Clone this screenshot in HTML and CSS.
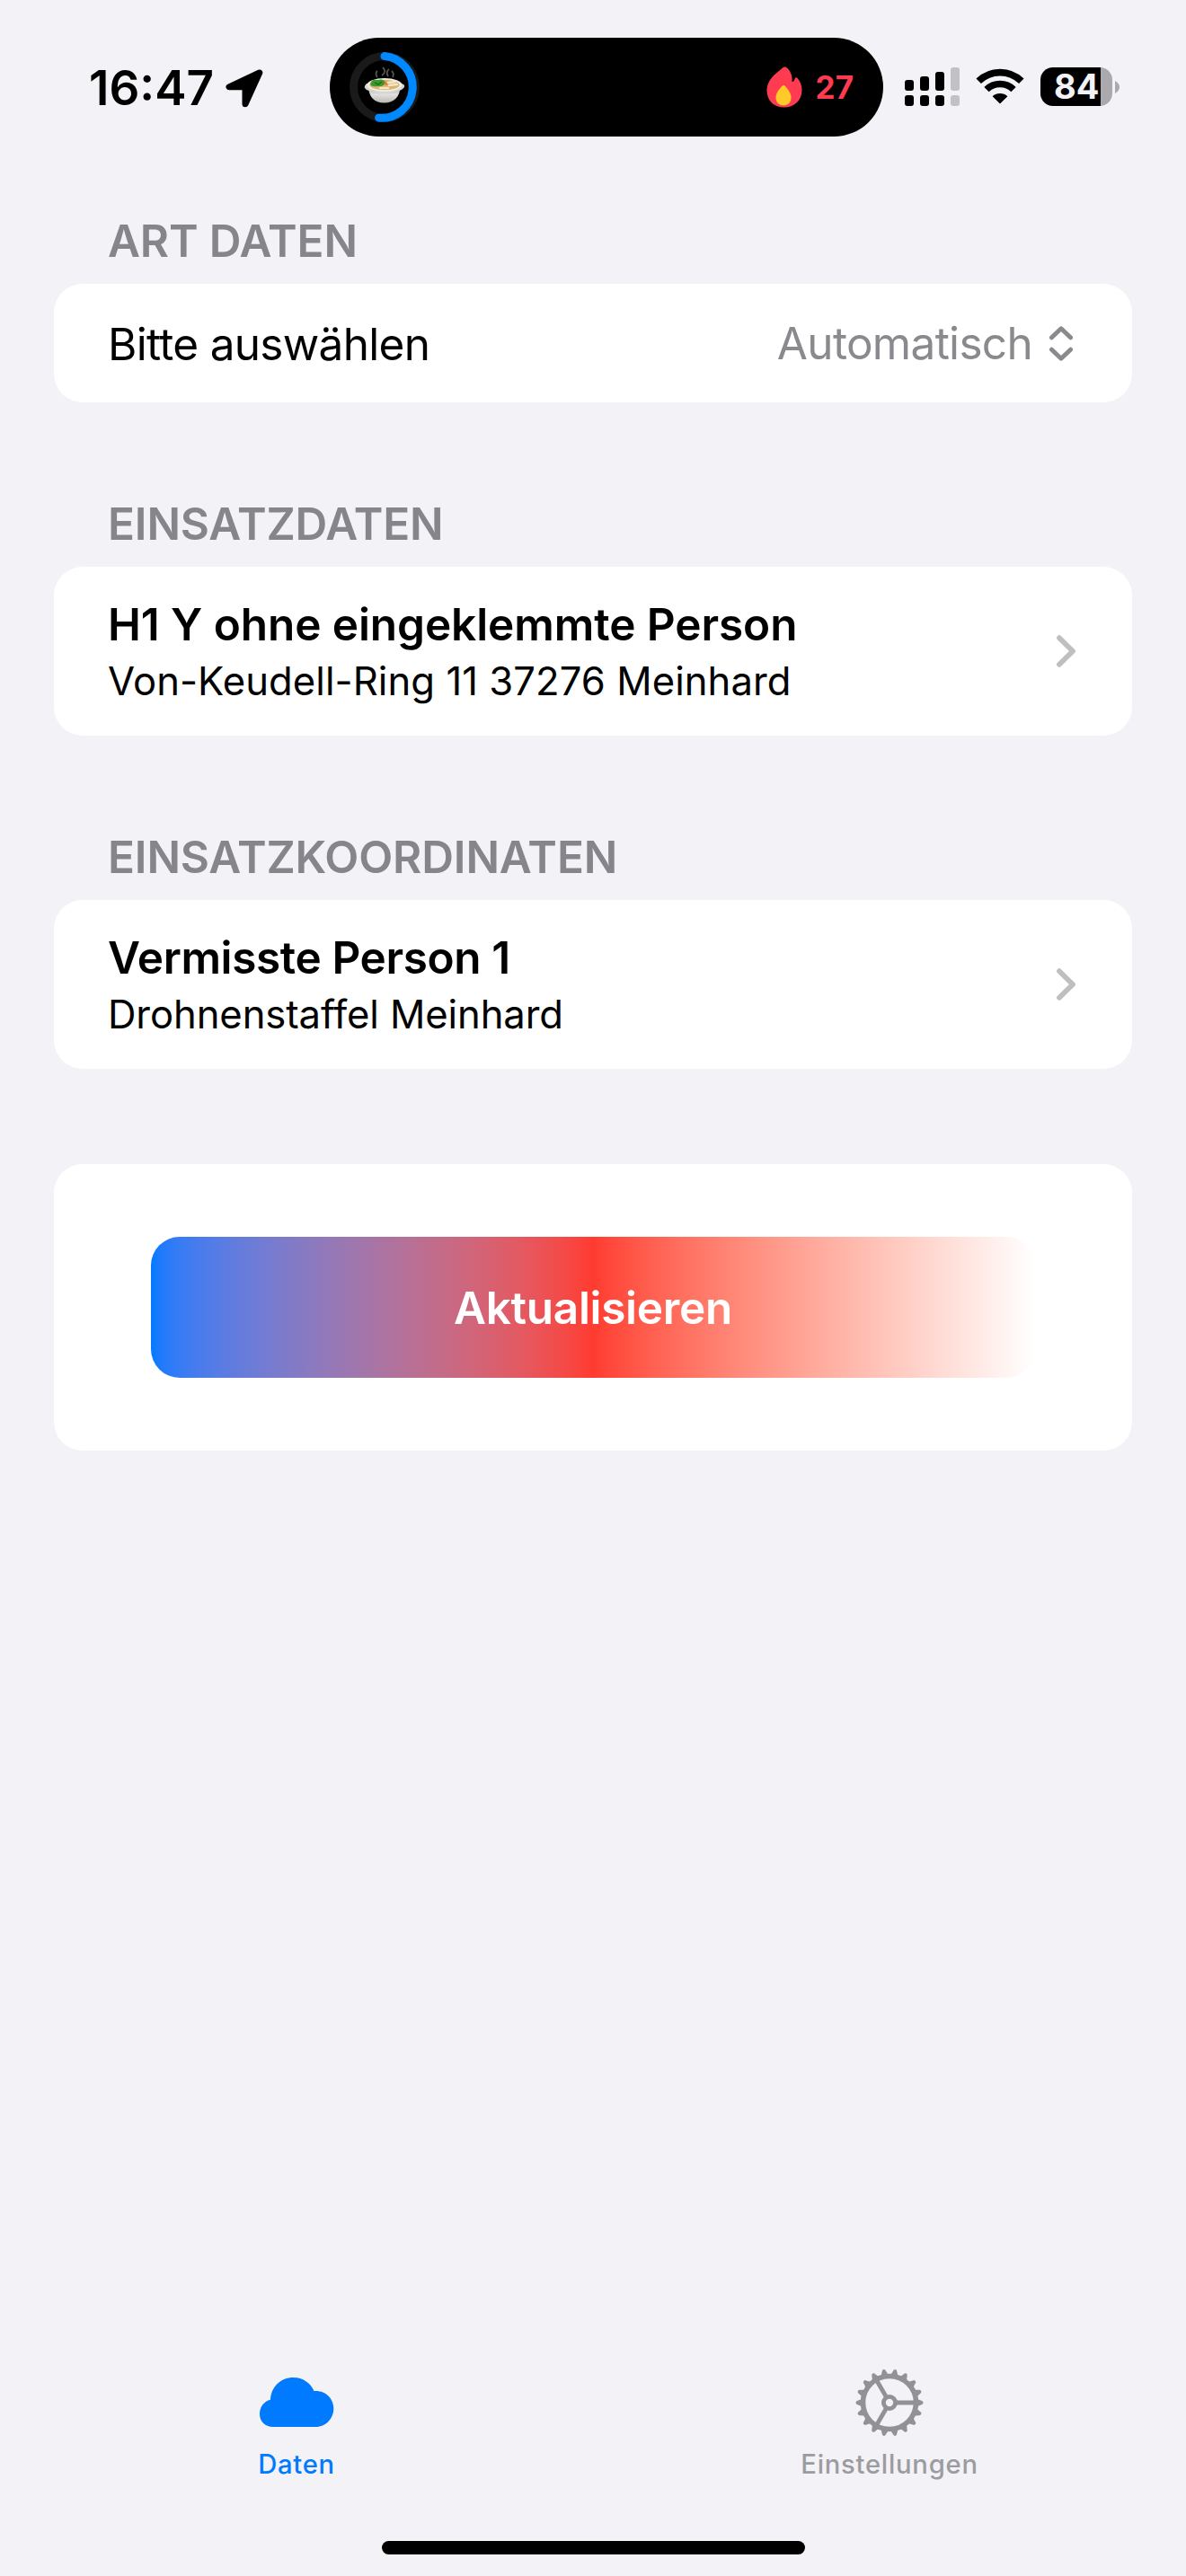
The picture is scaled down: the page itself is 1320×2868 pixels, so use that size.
FILE: index.html
```html
<!DOCTYPE html>
<html lang="de">
<head>
    <meta charset="UTF-8">
    <meta name="viewport" content="width=device-width, initial-scale=1.0">
    <title>Daten</title>
    <link rel="stylesheet" href="styles.css">
</head>
<body>
    <header class="status-bar">
        <div class="clock">
            <span class="time">16:47</span>
            <svg class="location" width="42" height="43" viewBox="0 0 42 43">
                <path d="M37.8 4 L4 19.8 L22 19.8 L22 38.7 Z" fill="#000" stroke="#000" stroke-width="7" stroke-linejoin="round"/>
            </svg>
        </div>
        <div class="island">
            <svg class="ring" width="78" height="78" viewBox="0 0 78 78">
                <defs>
                    <linearGradient id="bowl" x1="0" y1="0" x2="0" y2="1">
                        <stop offset="0" stop-color="#a9a7a3"/>
                        <stop offset="0.5" stop-color="#e2e0dc"/>
                        <stop offset="1" stop-color="#b9b7b3"/>
                    </linearGradient>
                </defs>
                <circle cx="39" cy="39" r="34.4" fill="none" stroke="#1a1a1b" stroke-width="9"/>
                <path d="M39 4.6 A34.4 34.4 0 1 1 32.6 73.2" fill="none" stroke="#0088ff" stroke-width="9" stroke-linecap="round"/>
                <!-- Suppenschüssel -->
                <path d="M31 28 Q28 24 31 21 M36 26 Q42 22 37 17 M43 27 Q40 22 44 19 M48 28 Q50 24 47 21" fill="none" stroke="#77777a" stroke-width="1.8" opacity="0.7"/>
                <path d="M20.500 38 C22 50 27 56.500 38.500 56.500 C50 56.500 55.500 50 57 38 Z" fill="url(#bowl)"/>
                <path d="M19 35 Q16 38 17 40 Q19 43 23 43 Q38 48 54 43 Q58 43 61 39 Q62 36 58 35 Z" fill="#d8d6d1"/>
                <ellipse cx="39" cy="36.500" rx="19.500" ry="7.500" fill="#f0ede6"/>
                <ellipse cx="39" cy="36.500" rx="16.500" ry="5.800" fill="#d9b26f"/>
                <path d="M23 36 Q24 30 31 31 Q38 29 40 34 Q38 39 31 38 Q25 39 23 36 Z" fill="#3b9a2b"/>
                <path d="M28 34 L32 36 L36 33" fill="none" stroke="#1f6f1a" stroke-width="1.500"/>
                <path d="M38 31 L43 36 L40 37 Z" fill="#ee6a25"/>
                <path d="M43 34 L51 33 M44 37 L53 36 M34 40 L43 40" stroke="#f6e6c4" stroke-width="2.400" stroke-linecap="round"/>
            </svg>
            <div class="streak">
                <svg width="40" height="46" viewBox="0 0 40 46">
                    <path d="M20 0.500 C23 -0.500 28.500 7 28.500 13 L28.500 16.500 C29.500 18 31 16 31.500 14 C32 12 33.500 12 34.500 13 C37.500 16.500 39.500 21 39.500 26.500 C39.500 38 31 45.500 19.500 45.500 C8 45.500 0.500 37.500 0.500 27 C0.500 13.500 13 6.500 17.500 1.800 Z" fill="#ff3b52"/>
                    <path d="M19.300 20.800 C22 22.500 27.500 29 27.500 34.500 C27.500 40 24 43.300 19 43.300 C14 43.300 10.500 40 10.500 34.500 C10.500 29 16 22.500 19.300 20.800 Z" fill="#ffca28"/>
                </svg>
                <span>27</span>
            </div>
        </div>
        <div class="indicators">
            <svg class="signal" width="61" height="43" viewBox="0 0 61 43">
                <rect x="0" y="14" width="10" height="12" rx="3"/>
                <rect x="17" y="10" width="10" height="16" rx="3"/>
                <rect x="34" y="5" width="10" height="21" rx="3"/>
                <rect x="51" y="0" width="10" height="26" rx="3" fill="#c2c1c6"/>
                <rect x="0" y="31" width="10" height="12" rx="3"/>
                <rect x="17" y="31" width="10" height="12" rx="3"/>
                <rect x="34" y="31" width="10" height="12" rx="3"/>
                <rect x="51" y="31" width="10" height="12" rx="3" fill="#c2c1c6"/>
            </svg>
            <svg class="wifi" width="54" height="41" viewBox="0 0 54 41">
                <path d="M3.200 15.300 A34 34 0 0 1 50.800 15.300" fill="none" stroke="#000" stroke-width="7.800"/>
                <path d="M12 24.600 A21.500 21.500 0 0 1 42 24.600" fill="none" stroke="#000" stroke-width="7.600"/>
                <path d="M27 40.500 L18.600 32.200 A12.300 12.300 0 0 1 35.400 32.200 Z"/>
            </svg>
            <div class="battery">
                <div class="battery-body"><span>84</span></div>
                <svg width="5" height="14" viewBox="0 0 5 14"><path d="M0 0 Q5 3 5 7 Q5 11 0 14 Z" fill="#a9a9ae"/></svg>
            </div>
        </div>
    </header>

    <main class="form">
        <section>
            <h2>ART DATEN</h2>
            <div class="card picker">
                <span class="picker-label">Bitte auswählen</span>
                <span class="picker-value">Automatisch
                    <svg width="26" height="39" viewBox="0 0 26 39">
                        <path d="M2.500 12.800 L13 2.800 L23.500 12.800 M2.500 26.200 L13 36.200 L23.500 26.200" fill="none" stroke="#8a8a8e" stroke-width="5" stroke-linecap="round" stroke-linejoin="round"/>
                    </svg>
                </span>
            </div>
        </section>

        <section>
            <h2>EINSATZDATEN</h2>
            <div class="card entry">
                <div>
                    <div class="entry-title">H1 Y ohne eingeklemmte Person</div>
                    <div class="entry-sub">Von-Keudell-Ring 11 37276 Meinhard</div>
                </div>
                <svg width="22" height="36" viewBox="0 0 22 36">
                    <path d="M3 3.200 L18 18 L3 32.800" fill="none" stroke="#bfbfc1" stroke-width="5.800" stroke-linecap="round" stroke-linejoin="round"/>
                </svg>
            </div>
        </section>

        <section>
            <h2>EINSATZKOORDINATEN</h2>
            <div class="card entry coords">
                <div>
                    <div class="entry-title">Vermisste Person 1</div>
                    <div class="entry-sub">Drohnenstaffel Meinhard</div>
                </div>
                <svg width="22" height="36" viewBox="0 0 22 36">
                    <path d="M3 3.200 L18 18 L3 32.800" fill="none" stroke="#bfbfc1" stroke-width="5.800" stroke-linecap="round" stroke-linejoin="round"/>
                </svg>
            </div>
        </section>

        <section class="card action">
            <button type="button">Aktualisieren</button>
        </section>
    </main>

    <nav class="tab-bar">
        <div class="tab active">
            <svg width="84" height="76" viewBox="0 0 84 76">
                <path d="M16 65 C6.500 65 1 58.500 1 50.500 C1 42.500 6 36.500 13 34.700 C13.500 20.500 24.500 10 38.500 10 C49 10 57.500 16 61.500 25 C74 24 83.300 33 83.300 44.500 C83.300 56 74.500 65 63.500 65 Z" fill="#007aff"/>
            </svg>
            <span>Daten</span>
        </div>
        <div class="tab">
            <svg width="76" height="76" viewBox="-38 -38 76 76">
                <defs>
                    <path id="tooth" d="M29 -5 Q32 -3.600 35.500 -2.200 Q37.500 -1.800 37.500 0 Q37.500 1.800 35.500 2.200 Q32 3.600 29 5 Z"/>
                </defs>
                <g fill="#929296">
                    <use href="#tooth"/>
                    <use href="#tooth" transform="rotate(20)"/>
                    <use href="#tooth" transform="rotate(40)"/>
                    <use href="#tooth" transform="rotate(60)"/>
                    <use href="#tooth" transform="rotate(80)"/>
                    <use href="#tooth" transform="rotate(100)"/>
                    <use href="#tooth" transform="rotate(120)"/>
                    <use href="#tooth" transform="rotate(140)"/>
                    <use href="#tooth" transform="rotate(160)"/>
                    <use href="#tooth" transform="rotate(180)"/>
                    <use href="#tooth" transform="rotate(200)"/>
                    <use href="#tooth" transform="rotate(220)"/>
                    <use href="#tooth" transform="rotate(240)"/>
                    <use href="#tooth" transform="rotate(260)"/>
                    <use href="#tooth" transform="rotate(280)"/>
                    <use href="#tooth" transform="rotate(300)"/>
                    <use href="#tooth" transform="rotate(320)"/>
                    <use href="#tooth" transform="rotate(340)"/>
                </g>
                <g fill="none" stroke="#929296">
                    <circle r="29.500" stroke-width="5.600"/>
                    <circle r="6.600" stroke-width="4.800"/>
                    <path d="M8 0 H28 M-4 -6.930 L-14 -24.250 M-4 6.930 L-14 24.250" stroke-width="4.800"/>
                </g>
            </svg>
            <span>Einstellungen</span>
        </div>
    </nav>
    <div class="home-indicator"></div>
</body>
</html>
```
FILE: styles.css
```css
* {
    box-sizing: border-box;
}
body {
    margin: 0;
    width: 1320px;
    height: 2868px;
    display: flex;
    flex-direction: column;
    background-color: #f2f2f7;
    color: #000;
    font-family: Inter, "Liberation Sans", sans-serif;
}
svg {
    display: block;
    flex-shrink: 0;
}

/* Statusleiste */
.status-bar {
    height: 177px;
    padding: 42px 74px 0 98px;
    display: flex;
    align-items: flex-start;
}
.clock {
    width: 269px;
    height: 112px;
    display: flex;
    align-items: center;
}
.time {
    width: 153px;
    padding-left: 1px;
    font-size: 53px;
    font-weight: 600;
    white-space: nowrap;
}
.island {
    width: 616px;
    height: 110px;
    padding: 0 33px 0 22px;
    display: flex;
    align-items: center;
    justify-content: space-between;
    background-color: #000;
    border-radius: 55px;
}
.streak {
    display: flex;
    align-items: center;
    gap: 15px;
    color: #ff3b52;
    font-size: 35px;
    font-weight: 700;
}
.indicators {
    margin: 33px 0 0 24px;
    display: flex;
    align-items: flex-start;
}
.wifi {
    margin-left: 18px;
}
.battery {
    margin-left: 18px;
    display: flex;
    align-items: center;
    gap: 3px;
}
.battery-body {
    width: 80px;
    height: 43px;
    padding-left: 15px;
    border-radius: 14px;
    background: linear-gradient(to right, #000 67px, #a9a9ae 67px);
    color: #f2f2f7;
    font-size: 38px;
    font-weight: 700;
    line-height: 43px;
}

/* Formular */
.form {
    flex: 1;
    padding: 61px 60px 0;
}
h2 {
    margin: 0 0 18px;
    padding-left: 60px;
    color: #86858b;
    font-size: 49.500px;
    font-weight: 600;
    line-height: 60px;
    letter-spacing: -0.150px;
}
section + section {
    margin-top: 105px;
}
.card {
    background-color: #fff;
    border-radius: 32px;
}
.picker {
    height: 132px;
    padding: 0 66px 0 60px;
    display: flex;
    align-items: center;
    justify-content: space-between;
    font-size: 49.500px;
    letter-spacing: -0.700px;
}
.picker-label {
    padding-top: 2px;
}
.picker-value {
    display: flex;
    align-items: center;
    gap: 19px;
    color: #8a8a8e;
}
.entry {
    height: 188px;
    padding: 0 62px 0 60px;
    display: flex;
    align-items: center;
    justify-content: space-between;
}
.entry-title {
    font-size: 49.500px;
    font-weight: 600;
    line-height: 60px;
    letter-spacing: -0.080px;
}
.entry-sub {
    margin-top: 7px;
    font-size: 43.600px;
    line-height: 54px;
    letter-spacing: 0.070px;
}
.coords .entry-title {
    letter-spacing: -0.380px;
}
.coords .entry-sub {
    letter-spacing: -0.100px;
}
.form .action {
    height: 319px;
    margin-top: 106px;
    padding: 81px 108px;
}
.action button {
    display: block;
    width: 100%;
    height: 157px;
    padding: 0;
    border: none;
    border-radius: 32px;
    background: linear-gradient(in oklab to right, #007aff, #ff3b30, #fff);
    color: #fff;
    font-family: inherit;
    font-size: 49.500px;
    font-weight: 600;
    letter-spacing: -0.300px;
}

/* Tab-Leiste */
.tab-bar {
    height: 192px;
    display: flex;
}
.tab {
    flex: 1;
    display: flex;
    flex-direction: column;
    align-items: center;
    color: #9c9ca0;
    font-size: 29.200px;
    font-weight: 500;
    line-height: 36px;
    letter-spacing: 0.750px;
}
.tab span {
    margin-top: 13px;
}
.active {
    color: #007aff;
}
.home-indicator {
    width: 471px;
    height: 15px;
    margin: 0 auto 24px;
    border-radius: 8px;
    background-color: #000;
}
```
